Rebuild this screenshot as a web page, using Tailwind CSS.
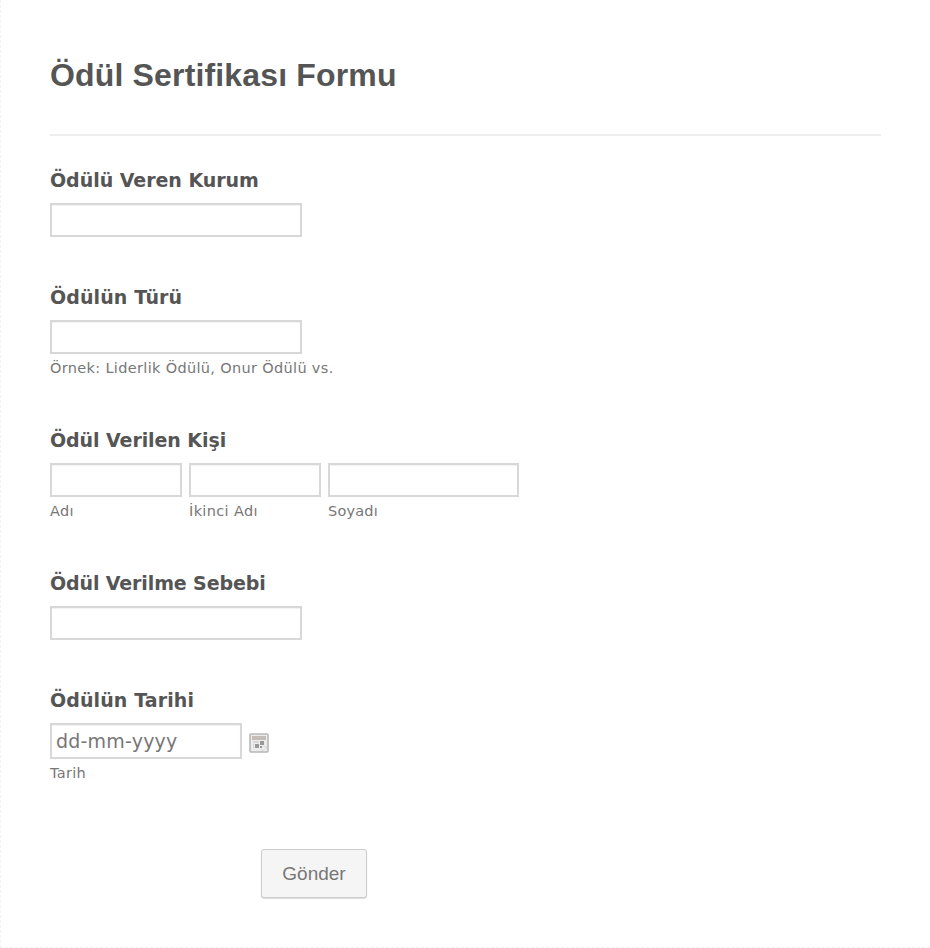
<!DOCTYPE html>
<html lang="tr">
<head>
    <meta charset="UTF-8">
    <meta name="viewport" content="width=device-width, initial-scale=1.0">
    <title>Ödül Sertifikası Formu</title>
    <script src="https://cdn.jsdelivr.net/npm/@tailwindcss/browser@4"></script>
</head>
<body class="bg-white">
    <form class="h-[948px] border-l border-b border-dashed border-[#f3f3f3] px-[49px] text-[#555] font-['DejaVu_Sans',Verdana,sans-serif]">
        <header class="h-[136px] border-b-2 border-[#eeeeee] pt-[56px]">
            <h1 class="text-[32px] leading-[38px] tracking-[0.16px] font-bold font-['Liberation_Sans',Arial,sans-serif]">Ödül Sertifikası Formu</h1>
        </header>

        <!-- Organisation -->
        <div class="h-[117px] pt-[32px]">
            <label for="kurum" class="block h-[35px] text-[19px] leading-[24px] tracking-[-0.04px] font-bold">Ödülü Veren Kurum</label>
            <input id="kurum" type="text" class="block h-[34px] w-[252px] border-2 border-[#d8d8d8] bg-white shadow-[inset_0_1px_1px_#f3f3f3]">
        </div>

        <!-- Award type -->
        <div class="h-[143px] pt-[32px]">
            <label for="tur" class="block h-[35px] text-[19px] leading-[24px] tracking-[0.1px] font-bold">Ödülün Türü</label>
            <input id="tur" type="text" class="block h-[34px] w-[252px] border-2 border-[#d8d8d8] bg-white shadow-[inset_0_1px_1px_#f3f3f3]">
            <p class="mt-[5px] text-[14.5px] leading-[18px] tracking-[0.33px] text-[#777]">Örnek: Liderlik Ödülü, Onur Ödülü vs.</p>
        </div>

        <!-- Recipient -->
        <div class="h-[143px] pt-[32px]">
            <label for="adi" class="block h-[35px] text-[19px] leading-[24px] tracking-[-0.08px] font-bold">Ödül Verilen Kişi</label>
            <div class="flex gap-[7px] text-[14.5px] leading-[18px] tracking-[0.35px] text-[#777]">
                <div>
                    <input id="adi" type="text" class="block h-[34px] w-[132px] border-2 border-[#d8d8d8] bg-white shadow-[inset_0_1px_1px_#f3f3f3]">
                    <p class="mt-[5px]">Adı</p>
                </div>
                <div>
                    <input type="text" aria-label="İkinci Adı" class="block h-[34px] w-[132px] border-2 border-[#d8d8d8] bg-white shadow-[inset_0_1px_1px_#f3f3f3]">
                    <p class="mt-[5px]">İkinci Adı</p>
                </div>
                <div>
                    <input type="text" aria-label="Soyadı" class="block h-[34px] w-[191px] border-2 border-[#d8d8d8] bg-white shadow-[inset_0_1px_1px_#f3f3f3]">
                    <p class="mt-[5px] tracking-[0.2px]">Soyadı</p>
                </div>
            </div>
        </div>

        <!-- Reason -->
        <div class="h-[117px] pt-[32px]">
            <label for="sebep" class="block h-[35px] text-[19px] leading-[24px] tracking-[-0.12px] font-bold">Ödül Verilme Sebebi</label>
            <input id="sebep" type="text" class="block h-[34px] w-[252px] border-2 border-[#d8d8d8] bg-white shadow-[inset_0_1px_1px_#f3f3f3]">
        </div>

        <!-- Date -->
        <div class="h-[193px] pt-[32px]">
            <label for="tarih" class="block h-[35px] text-[19px] leading-[24px] tracking-[0.1px] font-bold">Ödülün Tarihi</label>
            <div class="flex items-start gap-[7px]">
                <input id="tarih" type="text" placeholder="dd-mm-yyyy" class="block h-[36px] w-[192px] border-2 border-[#d8d8d8] bg-white px-[4px] text-[19px] tracking-[0.2px] shadow-[inset_0_1px_1px_#f3f3f3] placeholder:text-[#777]">
                <svg class="mt-[10px] h-5 w-5" viewBox="0 0 20 20" fill="none">
                    <rect x="1" y="1" width="18" height="18" rx="1" fill="#ececec" stroke="#b8b8b8" stroke-width="1.6"/>
                    <path d="M3 3h14v4H3z" fill="#c3bcb8"/>
                    <path d="M11 8h4v4h-4zM6 11h4v4H6zM11 13h2v2h-2z" fill="#999"/>
                    <path d="M4 8h6v2H4zM4 11h1v4H4z" fill="#d8d8d8"/>
                    <path d="M13 18v-4h5z" fill="#fafafa" stroke="#c6c6c6" stroke-width=".6"/>
                </svg>
            </div>
            <p class="mt-[5px] text-[14.5px] leading-[18px] tracking-[0.3px] text-[#777]">Tarih</p>
        </div>

        <button type="submit" class="ml-[211px] block h-[49px] w-[106px] rounded-[3px] border border-[#ccc] bg-[#f5f5f5] pt-px text-[19px] text-[#777] shadow-[0_1px_1px_#ddd] font-['Liberation_Sans',Arial,sans-serif]">Gönder</button>
    </form>
</body>
</html>
